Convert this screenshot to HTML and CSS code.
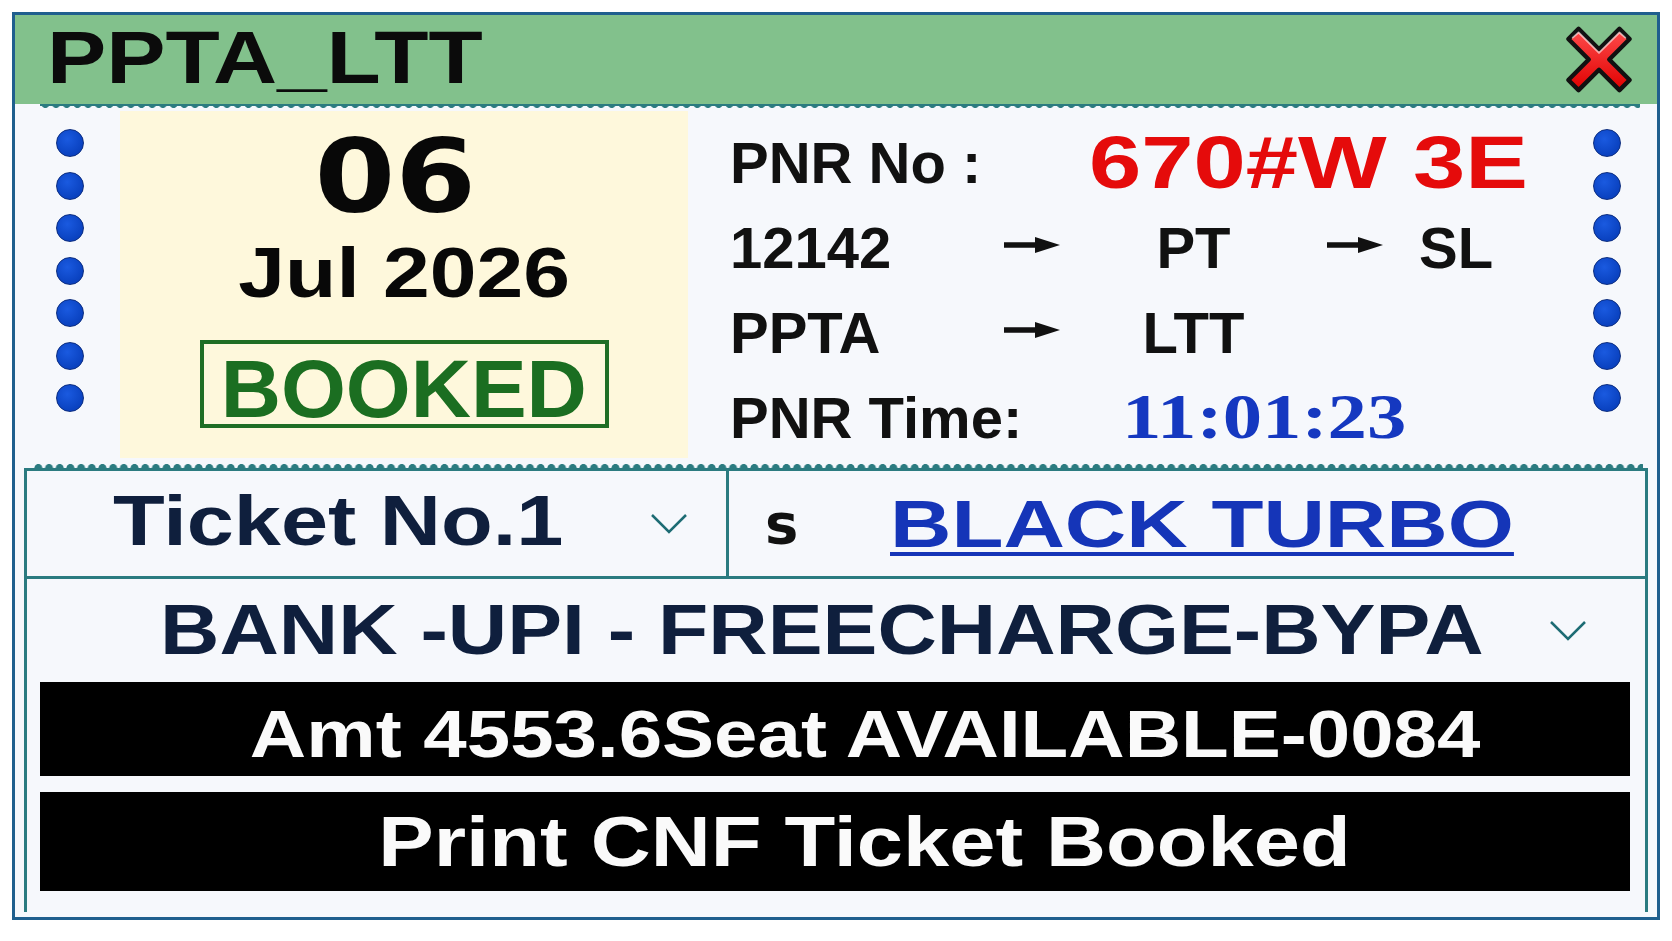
FILE: index.html
```html
<!DOCTYPE html>
<html lang="en">
<head>
<meta charset="utf-8">
<title>PPTA_LTT</title>
<link rel="stylesheet" href="styles.css">
</head>
<body>
<div class="ticket">
  <div class="header">
    <span class="title">PPTA_LTT</span>
    <svg class="close" viewBox="0 0 100 100" width="76" height="73" aria-label="close">
      <defs>
        <linearGradient id="xg" x1="0" y1="0" x2="0" y2="1">
          <stop offset="0" stop-color="#ff4d4d"/>
          <stop offset="1" stop-color="#e00000"/>
        </linearGradient>
      </defs>
      <path d="M22 8 L50 36 L78 8 L92 22 L64 50 L92 78 L78 92 L50 64 L22 92 L8 78 L36 50 L8 22 Z" fill="url(#xg)" stroke="#111" stroke-width="6" stroke-linejoin="round"/>
      <path d="M14 20 L22 13 L50 41 L78 13 L86 20" fill="none" stroke="#fff" stroke-opacity=".6" stroke-width="2.5" stroke-linecap="round" stroke-linejoin="round"/>
    </svg>
  </div>
  <div class="scallop-top"></div>
  <div class="summary">
    <div class="dots">
      <span class="dot"></span><span class="dot"></span><span class="dot"></span><span class="dot"></span><span class="dot"></span><span class="dot"></span><span class="dot"></span>
    </div>
    <div class="date-panel">
      <div class="day"><span class="day-num">06</span></div>
      <div class="month"><span class="month-text">Jul 2026</span></div>
      <div class="status"><span class="status-text">BOOKED</span></div>
    </div>
    <div class="info">
      <div class="row">
        <span class="label label-pnr">PNR No :</span>
        <span class="pnr">670#W 3E</span>
      </div>
      <div class="row">
        <span class="label label-col">12142</span>
        <span class="arrow"><svg viewBox="0 0 56 16" width="56" height="16"><path d="M0 8 H38" stroke="#111" stroke-width="5.5"/><path d="M31 0 L56 8 L31 16 Z" fill="#111"/></svg></span>
        <span class="label mid">PT</span>
        <span class="arrow"><svg viewBox="0 0 56 16" width="56" height="16"><path d="M0 8 H38" stroke="#111" stroke-width="5.5"/><path d="M31 0 L56 8 L31 16 Z" fill="#111"/></svg></span>
        <span class="label end">SL</span>
      </div>
      <div class="row">
        <span class="label label-col">PPTA</span>
        <span class="arrow"><svg viewBox="0 0 56 16" width="56" height="16"><path d="M0 8 H38" stroke="#111" stroke-width="5.5"/><path d="M31 0 L56 8 L31 16 Z" fill="#111"/></svg></span>
        <span class="label mid">LTT</span>
      </div>
      <div class="row">
        <span class="label label-time">PNR Time:</span>
        <span class="time">11:01:23</span>
      </div>
    </div>
    <div class="dots dots-right">
      <span class="dot"></span><span class="dot"></span><span class="dot"></span><span class="dot"></span><span class="dot"></span><span class="dot"></span><span class="dot"></span>
    </div>
  </div>
  <div class="scallop-bottom"></div>
  <div class="details">
    <div class="ticket-row">
      <div class="ticket-cell">
        <span class="ticket-no">Ticket No.1</span>
        <svg class="chevron" viewBox="0 0 38 21" width="38" height="21"><polyline points="2,2 19,19 36,2" fill="none" stroke="#1d6c74" stroke-width="2.5"/></svg>
      </div>
      <div class="class-cell">
        <span class="cls">s</span>
        <span class="train">BLACK TURBO</span>
      </div>
    </div>
    <div class="bank-row">
      <span class="bank">BANK -UPI - FREECHARGE-BYPA</span>
      <svg class="chevron" viewBox="0 0 38 21" width="38" height="21"><polyline points="2,2 19,19 36,2" fill="none" stroke="#1d6c74" stroke-width="2.5"/></svg>
    </div>
    <div class="bar bar-amt"><span class="bar-text amt-text">Amt 4553.6Seat AVAILABLE-0084</span></div>
    <div class="bar bar-print"><span class="bar-text print-text">Print CNF Ticket Booked</span></div>
  </div>
</div>
</body>
</html>
```
FILE: styles.css
```css
* { box-sizing: border-box; }

body {
  margin: 0;
  padding: 12px;
  background: #ffffff;
  font-family: "Liberation Sans", Arial, sans-serif;
}

.ticket {
  width: 1648px;
  height: 908px;
  border: 3px solid #1f5f8e;
  background: #f6f8fc;
}

/* header */
.header {
  height: 89px;
  background: #82c18c;
  display: flex;
  justify-content: space-between;
  padding: 0 20px 0 32px;
}
.title {
  align-self: flex-start;
  display: inline-block;
  font: bold 74px/85px "Liberation Sans", Arial, sans-serif;
  color: #0b0b0b;
  transform: scaleX(1.2);
  transform-origin: left center;
}
.close {
  align-self: center;
  display: block;
  overflow: visible;
}

.scallop-top {
  height: 7px;
  margin: 0 17px 0 25px;
  background:
    linear-gradient(#2b7b80, #2b7b80) 0 0 / 100% 2px no-repeat,
    radial-gradient(circle at 50% 0, #2b7b80 0 3.6px, rgba(43,123,128,0) 4.3px) 0 0 / 10.7px 7px repeat-x;
}

/* summary */
.summary {
  display: flex;
  height: 347px;
}
.dots {
  width: 105px;
  padding: 18px 0 0 5px;
  display: flex;
  flex-direction: column;
  align-items: center;
  gap: 14.5px;
}
.dots-right {
  width: 100px;
  padding-left: 0;
}
.dot {
  display: block;
  width: 28px;
  height: 28px;
  border-radius: 50%;
  background: radial-gradient(circle at 40% 35%, #1a5ae0, #0a42c0 70%);
  border: 1.5px solid #0a2c80;
}

.date-panel {
  width: 568px;
  background: #fef8dc;
  padding-top: 16px;
  text-align: center;
  color: #080808;
}
.day {
  padding-right: 18px;
  font: bold 101px/100px "DejaVu Sans", sans-serif;
}
.day-num {
  display: inline-block;
  transform: scaleX(1.15);
}
.month {
  font: bold 70px/93px "Liberation Sans", Arial, sans-serif;
}
.month-text {
  display: inline-block;
  transform: scaleX(1.2);
}
.status {
  width: 409px;
  margin: 20px auto 0;
  border: 4px solid #1f6e25;
  padding-top: 10px;
  font: bold 81px/70px "Liberation Sans", Arial, sans-serif;
  color: #1b6e21;
}
.status-text {
  display: inline-block;
  transform: scaleX(1.03);
}

.info {
  flex: 1;
  padding: 9px 0 0 42px;
}
.row {
  display: flex;
  align-items: flex-start;
  height: 85px;
}
.label {
  font: bold 58px/85px "Liberation Sans", Arial, sans-serif;
  color: #111111;
  white-space: nowrap;
}
.label-pnr { width: 359px; }
.label-col { width: 274px; }
.label-time { width: 392px; }
.mid {
  width: 267px;
  text-align: center;
}
.end { margin-left: 36px; }
.arrow {
  width: 56px;
  height: 85px;
  padding-bottom: 6px;
  display: flex;
  align-items: center;
}
.arrow svg { display: block; }
.pnr {
  display: inline-block;
  font: bold 74px/85px "Liberation Sans", Arial, sans-serif;
  color: #e50b0b;
  white-space: nowrap;
  transform: scaleX(1.27);
  transform-origin: left center;
}
.time {
  display: inline-block;
  font: bold 63px/85px "Liberation Serif", "Times New Roman", serif;
  color: #1538c0;
  transform: scaleX(1.25);
  transform-origin: left center;
}

.scallop-bottom {
  height: 10px;
  margin: 0 14px 0 18px;
  background: radial-gradient(circle at 50% 100%, #2b7b80 0 3.6px, rgba(43,123,128,0) 4.3px) 0 100% / 10.7px 5px repeat-x;
}

/* details */
.details {
  height: 444px;
  margin: 0 9px;
  border: 3px solid #2b7b80;
  border-bottom: 0;
  padding-bottom: 21px;
  color: #0f1f3d;
}
.ticket-row {
  display: flex;
  height: 108px;
  border-bottom: 3px solid #2b7b80;
}
.ticket-cell {
  width: 702px;
  border-right: 3px solid #2b7b80;
  display: flex;
  align-items: center;
  padding: 0 38px 0 86px;
}
.ticket-no {
  align-self: flex-start;
  display: inline-block;
  font: bold 70px/100px "Liberation Sans", Arial, sans-serif;
  transform: scaleX(1.21);
  transform-origin: left center;
}
.chevron {
  display: block;
  margin-left: auto;
}
.class-cell {
  flex: 1;
  display: flex;
  align-items: flex-start;
  padding-left: 36px;
}
.cls {
  font: bold 56px/105px "DejaVu Sans", sans-serif;
  color: #111111;
}
.train {
  display: inline-block;
  margin-left: 92px;
  font: bold 67px/105px "Liberation Sans", Arial, sans-serif;
  color: #1535b8;
  text-decoration: underline;
  text-decoration-thickness: 4px;
  text-underline-offset: 5px;
  transform: scaleX(1.27);
  transform-origin: left center;
}

.bank-row {
  height: 103px;
  display: flex;
  align-items: center;
  padding: 0 58px 0 133px;
}
.bank {
  align-self: flex-start;
  display: inline-block;
  font: bold 70px/103px "Liberation Sans", Arial, sans-serif;
  white-space: nowrap;
  transform: scaleX(1.175);
  transform-origin: left center;
}

.bar {
  margin: 0 15px 0 13px;
  background: #000000;
  color: #fafafa;
  text-align: center;
  padding-left: 60px;
  white-space: nowrap;
  font-family: "Liberation Sans", Arial, sans-serif;
  font-weight: bold;
}
.bar-text {
  display: inline-block;
}
.bar-amt {
  height: 94px;
  padding-top: 10px;
  font-size: 67px;
  line-height: 84px;
}
.amt-text { transform: scaleX(1.165); }
.bar-print {
  margin-top: 16px;
  height: 99px;
  font-size: 71px;
  line-height: 99px;
}
.print-text { transform: scaleX(1.17); }
```
